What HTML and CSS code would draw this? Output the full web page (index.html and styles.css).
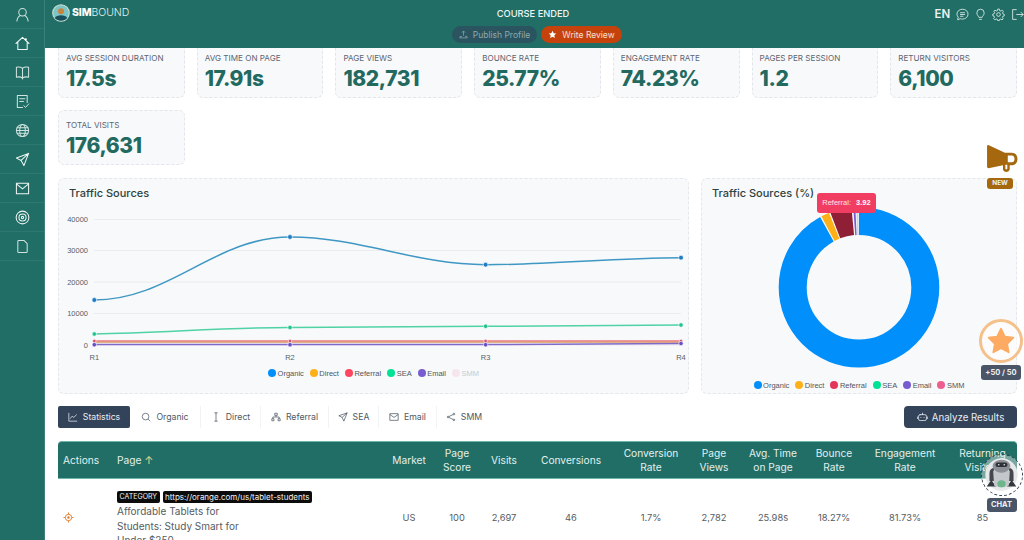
FILE: index.html
```html
<!DOCTYPE html>
<html lang="en">
<head>
<meta charset="utf-8">
<title>Simbound</title>
<link rel="stylesheet" href="styles.css">
</head>
<body>
<div class="app">
  <nav class="sidebar">
    <a class="nav-item"><svg viewBox="0 0 16 16"><circle cx="8" cy="5.500" r="4"/><path d="M2 15c.5-3.500 2.500-5.500 3.800-6M14 15c-.5-3.500-2.500-5.500-3.800-6"/></svg></a>
    <a class="nav-item nav-bright"><svg viewBox="0 0 16 16"><path d="M1 8 8 1.500 15 8M3 6.500V14.500H13V6.500"/><circle cx="11.500" cy="3.500" r="1.200" class="fill"/></svg></a>
    <a class="nav-item"><svg viewBox="0 0 16 16"><path d="M8 3.500C6.500 2.300 3.500 2 1.500 2.500V13C3.500 12.500 6.500 12.800 8 14 9.500 12.800 12.500 12.500 14.500 13V2.500C12.500 2 9.500 2.300 8 3.500ZM8 3.500V15"/></svg></a>
    <a class="nav-item"><svg viewBox="0 0 16 16"><path d="M8 14.500H2.500V1.500H13V9M5 5H10.500M5 8H9"/><path d="M9.500 12.500 11.300 14.500 15 10.500" transform="scale(.95) translate(.5 .6)"/></svg></a>
    <a class="nav-item"><svg viewBox="0 0 16 16"><circle cx="8" cy="8" r="6.500"/><ellipse cx="8" cy="8" rx="3" ry="6.500"/><path d="M1.500 8H14.500M2.300 5H13.700M2.300 11H13.700"/></svg></a>
    <a class="nav-item nav-bright"><svg viewBox="0 0 16 16"><path d="M14.500 1.500 1.500 6.500 6.500 9 9.500 14.500ZM14.500 1.500 6.500 9"/></svg></a>
    <a class="nav-item nav-bright"><svg viewBox="0 0 16 16"><path d="M1.500 2.500H14.500V13.500H1.500ZM1.500 3 8 8.500 14.500 3"/></svg></a>
    <a class="nav-item nav-bright"><svg viewBox="0 0 16 16"><circle cx="8" cy="8" r="6.800"/><circle cx="8" cy="8" r="3.800"/><circle cx="8" cy="8" r="1.200"/></svg></a>
    <a class="nav-item"><svg viewBox="0 0 16 16"><path d="M3 2.500Q3 1.500 4 1.500H9.500L13 5V13.500Q13 14.500 12 14.500H4Q3 14.500 3 13.500Z"/></svg></a>
  </nav>
  <div class="column">
    <header class="topbar">
      <div class="brand">
        <svg class="logo" viewBox="0 0 20 20"><circle cx="10" cy="10" r="9.200" fill="#7cc5c7" stroke="#cfe0d0" stroke-width="1.200"/><circle cx="10" cy="8" r="3.400" fill="#c8843f"/><path d="M3 15.500C5 11.500 15 11.500 17 15.500 13 19.500 7 19.500 3 15.500Z" fill="#17505c"/></svg>
        <span class="brand-name"><b>SIM</b>BOUND</span>
      </div>
      <div class="status">
        <div class="status-title">COURSE ENDED</div>
        <div class="status-actions">
          <span class="pill pill-dark"><svg viewBox="0 0 12 12"><path d="M6 7.500V1.500M3.800 3.500 6 1.300 8.200 3.500M1.500 8.500H4M8 8.500H10.500L11 10.500H1L1.500 8.500"/></svg>Publish Profile</span>
          <span class="pill pill-orange"><svg viewBox="0 0 12 12"><path class="solid" d="M6 1 7.500 4.300 11 4.700 8.400 7.100 9.100 10.700 6 8.900 2.900 10.700 3.600 7.100 1 4.700 4.500 4.300Z"/></svg>Write Review</span>
        </div>
      </div>
      <div class="tools">
        <span class="lang">EN</span>
        <svg viewBox="0 0 16 16"><path d="M8 1.500C4 1.500 1.200 4.200 1.200 7.500c0 1.500.6 2.800 1.500 3.800L2 14.500l3.200-1.300c.9.300 1.800.4 2.800.4 4 0 6.800-2.700 6.800-6.100S12 1.500 8 1.500ZM5 5.800H11M5 8H11M5 10.200H9"/></svg>
        <svg viewBox="0 0 16 16"><path d="M6 11.500C5.500 9.500 3.500 8.800 3.500 6A4.500 4.500 0 0 1 12.500 6C12.500 8.800 10.500 9.500 10 11.500ZM6.300 14H9.700"/></svg>
        <svg viewBox="0 0 16 16"><circle cx="8" cy="8" r="2.300"/><path d="M7 1.300H9L9.400 3.200 10.900 3.800 12.600 2.800 14 4.300 13 5.900 13.600 7.400 15 7.800V9.800L13.400 10.200 12.800 11.600 13.800 13.200 12.300 14.600 10.700 13.600 9.300 14.200 9 15.500H7L6.600 14 5.200 13.500 3.500 14.500 2 13 3.100 11.400 2.500 10 1 9.600V7.500L2.600 7.100 3.200 5.700 2.200 4.100 3.700 2.700 5.300 3.700 6.700 3.100Z"/></svg>
        <svg viewBox="0 0 16 16"><path d="M7 2H2V14H7M6.500 8H15M12 5 15 8 12 11"/></svg>
      </div>
    </header>
    <main class="main">
      <div class="content">
        <section class="metrics">
          <div class="metric"><div class="metric-label">AVG SESSION DURATION</div><div class="metric-value">17.5s</div></div>
          <div class="metric"><div class="metric-label">AVG TIME ON PAGE</div><div class="metric-value">17.91s</div></div>
          <div class="metric"><div class="metric-label">PAGE VIEWS</div><div class="metric-value">182,731</div></div>
          <div class="metric"><div class="metric-label">BOUNCE RATE</div><div class="metric-value">25.77%</div></div>
          <div class="metric"><div class="metric-label">ENGAGEMENT RATE</div><div class="metric-value">74.23%</div></div>
          <div class="metric"><div class="metric-label">PAGES PER SESSION</div><div class="metric-value">1.2</div></div>
          <div class="metric"><div class="metric-label">RETURN VISITORS</div><div class="metric-value">6,100</div></div>
          <div class="metric"><div class="metric-label">TOTAL VISITS</div><div class="metric-value">176,631</div></div>
        </section>

        <section class="charts">
          <div class="panel panel-line">
            <h3 class="panel-title">Traffic Sources</h3>
            <svg class="chart-line" viewBox="59 209 629 157">
              <g class="grid">
                <path d="M94 219.500H681M94 250.500H681M94 282H681M94 313.500H681M94 345H681"/>
              </g>
              <g class="axis">
                <text x="88" y="222">40000</text>
                <text x="88" y="253">30000</text>
                <text x="88" y="284.500">20000</text>
                <text x="88" y="316">10000</text>
                <text x="88" y="347.500">0</text>
              </g>
              <g class="axis axis-x">
                <text x="94.300" y="359.500">R1</text>
                <text x="290" y="359.500">R2</text>
                <text x="485.600" y="359.500">R3</text>
                <text x="681" y="359.500">R4</text>
              </g>
              <path class="s s-organic" d="M94 300C170 300 215 237 290 237C360 237 415 264.700 485.600 264.700C550 264.700 615 257.700 681 257.700"/>
              <path class="s s-sea" d="M94 334C160 333 225 327.500 290 327.500C355 327.500 420 326.300 485.600 326.300C550 326.300 615 325 681 325"/>
              <path class="s s-smm" d="M94 340.700H681"/>
              <path class="s s-referral" d="M94 341.200H681"/>
              <path class="s s-direct" d="M94 342.200H681"/>
              <path class="s s-email" d="M94 344.500H485.600L681 343.500"/>
              <g class="dots-blue"><circle cx="94.300" cy="300" r="2.400"/><circle cx="290" cy="237" r="2.400"/><circle cx="485.600" cy="264.700" r="2.400"/><circle cx="681" cy="257.700" r="2.400"/></g>
              <g class="dots-green"><circle cx="94.300" cy="334" r="2.200"/><circle cx="290" cy="327.500" r="2.200"/><circle cx="485.600" cy="326.300" r="2.200"/><circle cx="681" cy="325" r="2.200"/></g>
              <g class="dots-red"><circle cx="94.300" cy="341" r="1.800"/><circle cx="290" cy="341" r="1.800"/><circle cx="485.600" cy="341" r="1.800"/><circle cx="681" cy="341" r="1.800"/></g>
              <g class="dots-purple"><circle cx="94.300" cy="344.700" r="2.200"/><circle cx="290" cy="344.700" r="2.200"/><circle cx="485.600" cy="344.700" r="2.200"/><circle cx="681" cy="343.500" r="2.200"/></g>
            </svg>
            <div class="legend">
              <span><i class="dot d-blue"></i>Organic</span>
              <span><i class="dot d-orange"></i>Direct</span>
              <span><i class="dot d-red"></i>Referral</span>
              <span><i class="dot d-green"></i>SEA</span>
              <span><i class="dot d-purple"></i>Email</span>
              <span class="legend-off"><i class="dot d-pink"></i>SMM</span>
            </div>
          </div>

          <div class="panel panel-donut">
            <h3 class="panel-title">Traffic Sources (%)</h3>
            <svg class="chart-donut" viewBox="702 209 314 169">
              <g class="ring">
                <circle class="seg seg-organic" cx="859" cy="287.300" r="66.300" pathLength="360" stroke-dasharray="331 360" stroke-dashoffset="0" transform="rotate(-90 859 287.300)"/>
                <circle class="seg seg-direct" cx="859" cy="287.300" r="66.300" pathLength="360" stroke-dasharray="6 360" stroke-dashoffset="-332" transform="rotate(-90 859 287.300)"/>
                <circle class="seg seg-referral" cx="859" cy="287.300" r="68" pathLength="360" stroke-dasharray="15.500 360" stroke-dashoffset="-339" transform="rotate(-90 859 287.300)"/>
                <circle class="seg seg-email" cx="859" cy="287.300" r="66.300" pathLength="360" stroke-dasharray="1.500 360" stroke-dashoffset="-355.800" transform="rotate(-90 859 287.300)"/>
                <circle class="seg seg-smm" cx="859" cy="287.300" r="66.300" pathLength="360" stroke-dasharray="1.500 360" stroke-dashoffset="-358" transform="rotate(-90 859 287.300)"/>
              </g>
            </svg>
            <div class="tooltip">Referral: <b>3.92</b></div>
            <div class="legend">
              <span><i class="dot d-blue"></i>Organic</span>
              <span><i class="dot d-orange"></i>Direct</span>
              <span><i class="dot d-red"></i>Referral</span>
              <span><i class="dot d-green"></i>SEA</span>
              <span><i class="dot d-purple"></i>Email</span>
              <span><i class="dot d-pink2"></i>SMM</span>
            </div>
          </div>
        </section>

        <section class="tabbar">
          <div class="tabs">
            <span class="tab tab-active w-stat"><svg viewBox="0 0 12 12"><path d="M1 1V11H11M2.500 8 5 5 7 6.500 10.500 3"/></svg>Statistics</span>
            <span class="tab w-org"><svg viewBox="0 0 12 12"><circle cx="5.500" cy="5.500" r="4"/><path d="M8.500 8.500 11 11"/></svg>Organic</span>
            <span class="tab w-dir"><svg viewBox="0 0 12 12"><path d="M4 1H8M4 11H8M6 1V11"/></svg>Direct</span>
            <span class="tab w-ref"><svg viewBox="0 0 12 12"><path d="M4.500 1.500H7.500V4H4.500ZM1 8H3.500V10.500H1ZM8.500 8H11V10.500H8.500ZM6 4V6M2.200 8V6H9.800V8"/></svg>Referral</span>
            <span class="tab w-sea"><svg viewBox="0 0 12 12"><path d="M11 1 1 4.500 5 6.500 7 11ZM11 1 5 6.500"/></svg>SEA</span>
            <span class="tab w-mail"><svg viewBox="0 0 12 12"><path d="M1 2H11V10H1ZM1 3 6 6.500 11 3"/></svg>Email</span>
            <span class="tab w-smm"><svg viewBox="0 0 12 12"><circle cx="9.500" cy="2.500" r="1"/><circle cx="2.500" cy="6" r="1"/><circle cx="9.500" cy="9.500" r="1"/><path d="M8.600 3 3.400 5.500M3.400 6.500 8.600 9"/></svg>SMM</span>
          </div>
          <span class="analyze"><svg viewBox="0 0 14 12"><rect x="2" y="3" width="10" height="7.500" rx="2"/><path d="M7 3V1M.5 6V8M13.500 6V8M5 6.500V6.600M9 6.500V6.600"/></svg>Analyze Results</span>
        </section>

        <table class="data">
          <colgroup>
            <col class="c-act"><col class="c-page"><col class="c-mkt"><col class="c-score"><col class="c-vis"><col class="c-conv"><col class="c-rate"><col class="c-views"><col class="c-time"><col class="c-bounce"><col class="c-eng"><col class="c-ret">
          </colgroup>
          <thead>
            <tr>
              <th class="left">Actions</th>
              <th class="left th-page">Page <span class="arrow">↑</span></th>
              <th>Market</th>
              <th>Page<br>Score</th>
              <th>Visits</th>
              <th>Conversions</th>
              <th>Conversion<br>Rate</th>
              <th>Page<br>Views</th>
              <th>Avg. Time<br>on Page</th>
              <th>Bounce<br>Rate</th>
              <th>Engagement<br>Rate</th>
              <th>Returning<br>Visitors</th>
            </tr>
          </thead>
          <tbody>
            <tr>
              <td class="left"><svg class="target" viewBox="0 0 12 12"><circle cx="6" cy="6" r="3.500"/><circle cx="6" cy="6" r="1.300" class="solid"/><path d="M6 .5V2.500M6 9.500V11.500M.5 6H2.500M9.500 6H11.500"/></svg></td>
              <td class="left td-page">
                <div class="tags"><span class="tag">CATEGORY</span><span class="tag tag-url">https://orange.com/us/tablet-students</span></div>
                <div class="page-name">Affordable Tablets for Students: Study Smart for Under $250</div>
              </td>
              <td>US</td><td>100</td><td>2,697</td><td>46</td><td>1.7%</td><td>2,782</td><td>25.98s</td><td>18.27%</td><td>81.73%</td><td>85</td>
            </tr>
          </tbody>
        </table>
      </div>
    </main>
  </div>

  <div class="float float-news">
    <svg viewBox="0 0 32 28"><path class="mega" d="M1.500 0Q.5 0 .5 1.500V22.500Q.5 24 2 24L17 21V25C17 27 19 28 20.500 28 22 28 24 27 24 25V21H26C30 21 32 18 32 14.500 32 11 30 8 26 8H19L3 .5Z"/><path class="mega-hole" d="M22 11H26C28 11 29 12.500 29 14.500 29 16.500 28 18 26 18H22ZM19.500 20.500H21.500V24.500C21.500 25.500 19.500 25.500 19.500 24.500Z"/></svg>
    <span class="badge badge-new">NEW</span>
  </div>
  <div class="float float-star">
    <div class="star-ring"><svg viewBox="0 0 24 24"><path d="M12 1.500 15.300 8.200 22.600 9.200 17.300 14.400 18.600 21.700 12 18.200 5.400 21.700 6.700 14.400 1.400 9.200 8.700 8.200Z"/></svg></div>
    <span class="badge badge-score">+50 / 50</span>
  </div>
  <div class="float float-bot">
    <div class="bot-ring">
      <svg viewBox="0 0 40 40">
        <circle cx="20" cy="20" r="17.500" fill="#e6e8e9"/>
        <path d="M7 19C7 15 9 13 12 13V27H7ZM33 19C33 15 31 13 28 13V27H33Z" fill="#44484e"/>
        <path d="M9 26 4 33H14ZM31 26 36 33H26Z" fill="#34383e"/>
        <path d="M11 16H29L28 32Q20 36 12 32Z" fill="#c4c7cb"/>
        <ellipse cx="20" cy="11" rx="9.500" ry="7" fill="#8d9197"/>
        <rect x="13.500" y="7" width="13" height="5" rx="2.500" fill="#2f3339"/>
        <circle cx="17" cy="9.500" r=".9" fill="#dfe3e6"/>
        <circle cx="23" cy="9.500" r=".9" fill="#dfe3e6"/>
        <ellipse cx="20" cy="30" rx="4.500" ry="3.800" fill="#6db58a"/>
      </svg>
    </div>
    <span class="badge badge-chat">CHAT</span>
  </div>
</div>
</body>
</html>
```

FILE: styles.css
```css
* { box-sizing: border-box; }
html, body { margin: 0; height: 540px; overflow: hidden; background: #fff; }
body { font-family: Inter, "Noto Sans", sans-serif; color: #4c5560; }

.app { position: relative; display: flex; width: 1024px; height: 540px; overflow: hidden; }

/* sidebar */
.sidebar { flex: 0 0 45px; background: #206e65; border-right: 1px solid #3b8177; }
.nav-item { display: flex; align-items: center; justify-content: center; height: 29px; border-bottom: 1px solid #2e786f; }
.nav-item svg { width: 15px; height: 15px; fill: none; stroke: #cfe3df; stroke-width: 1.100; stroke-linejoin: round; stroke-linecap: round; }
.nav-item svg .fill { fill: #fff; stroke: none; }
.nav-bright svg { stroke: #eef7f5; }

/* header */
.column { flex: 1; display: flex; flex-direction: column; min-width: 0; }
.topbar { flex: 0 0 48px; height: 48px; background: #206e65; display: grid; grid-template-columns: 1fr auto 1fr; padding: 0 2px 0 7px; color: #fff; }
.brand { display: flex; align-items: flex-start; gap: 2px; padding-top: 4px; }
.logo { width: 18px; height: 18px; }
.brand-name { font-size: 10.500px; line-height: 18px; font-weight: 300; letter-spacing: -.1px; color: #e6f2f0; }
.brand-name b { font-weight: 800; color: #fff; }
.status { display: flex; flex-direction: column; align-items: center; padding-top: 8px; }
.status-title { margin-right: 8px; font-size: 9.300px; line-height: 12px; font-weight: 500; color: #eef6f5; }
.status-actions { display: flex; gap: 4px; margin-top: 6px; }
.pill { display: flex; align-items: center; justify-content: center; gap: 5px; height: 17px; border-radius: 9px; font-size: 8.500px; }
.pill svg { width: 9px; height: 9px; fill: none; stroke: currentColor; stroke-width: 1; }
.pill svg .solid { fill: #fff; stroke: none; }
.pill-dark { width: 85px; background: #2a5560; color: #8fa8ab; }
.pill-orange { width: 81px; background: #c5420d; color: #f7e1d6; }
.tools { display: flex; align-items: flex-start; justify-content: flex-end; gap: 5.300px; margin-right: -1.500px; padding-top: 7px; color: #e9f3f1; }
.tools svg { width: 13px; height: 13px; margin-top: 1px; fill: none; stroke: currentColor; stroke-width: 1; stroke-linejoin: round; }
.lang { font-size: 11.500px; line-height: 14px; font-weight: 600; }

/* main */
.main { flex: 1; overflow: hidden; min-height: 0; }
.content { margin-top: -5px; padding: 0 7px 0 13px; display: flex; flex-direction: column; }

.metrics { display: grid; grid-template-columns: repeat(7, 1fr); gap: 12px; }
.metric { height: 55px; padding: 9px 7px 0; background: #f8f9fb; border: 1px dashed #e2e6eb; border-radius: 6px; }
.metric-label { font-size: 8.100px; line-height: 10px; color: #5d6671; white-space: nowrap; }
.metric-value { margin-top: 3px; font-size: 21px; line-height: 26px; font-weight: 800; letter-spacing: -.4px; color: #226a60; white-space: nowrap; }

.charts { display: flex; gap: 12px; margin-top: 13px; }
.panel { position: relative; height: 216px; background: #f8f9fb; border: 1px dashed #e4e7ec; border-radius: 6px; display: flex; flex-direction: column; }
.panel-line { flex: 0 0 631px; }
.panel-donut { flex: 0 0 316px; }
.panel-title { margin: 0; height: 30px; padding: 7px 0 0 10px; font-size: 11px; line-height: 14px; font-weight: 500; color: #2d4340; white-space: nowrap; }
.chart-line { display: block; width: 629px; height: 157px; overflow: visible; }
.chart-donut { display: block; width: 314px; height: 169px; overflow: visible; }
.grid path { fill: none; stroke: #e7e9ee; stroke-width: .8; }
.axis text { font-family: "Liberation Sans", Arial, sans-serif; font-size: 7.500px; fill: #585f66; text-anchor: end; }
.axis-x text { text-anchor: middle; }
.s { fill: none; stroke-width: 1.500; }
.s-organic { stroke: #3f97c4; }
.s-sea { stroke: #4fd3a5; }
.s-smm { stroke: #eeb5c8; }
.s-referral { stroke: #ea7a7e; }
.s-direct { stroke: #e2b084; }
.s-email { stroke: #8169c9; }
.dots-blue circle { fill: #1f7cc4; stroke: #fff; stroke-width: .6; }
.dots-green circle { fill: #1fc48d; stroke: #fff; stroke-width: .6; }
.dots-red circle { fill: #d9506f; stroke: #fff; stroke-width: .6; }
.dots-purple circle { fill: #6a4fc4; stroke: #fff; stroke-width: .6; }

.legend { display: flex; justify-content: center; align-items: center; gap: 6px; height: 14px; font-family: "Liberation Sans", Arial, sans-serif; font-size: 7.500px; color: #4f565d; }
.legend span { display: flex; align-items: center; gap: 1.500px; }
.legend-off { opacity: .3; }
.dot { display: block; width: 8px; height: 8px; border-radius: 50%; }
.d-blue { background: #008ffb; }
.d-orange { background: #feb019; }
.d-red { background: #ff4560; }
.d-green { background: #00e396; }
.d-purple { background: #775dd0; }
.d-pink { background: #f5b8d0; }
.d-pink2 { background: #ee5f8f; }
.panel-donut .d-red { background: #e2375a; }

.seg { fill: none; stroke-width: 28; }
.seg-organic { stroke: #008ffb; }
.seg-direct { stroke: #feb019; }
.seg-referral { stroke: #8f1f35; stroke-width: 31; }
.seg-email { stroke: #775dd0; }
.seg-smm { stroke: #c9d4e6; }

.tooltip { position: absolute; left: 115px; top: 14px; width: 59px; height: 20px; background: #f23d62; border-radius: 3px; color: #fde3e8; font-family: "Liberation Sans", Arial, sans-serif; font-size: 7.500px; line-height: 20px; text-align: center; white-space: pre; }
.tooltip b { color: #fff; margin-left: 3px; }

/* tabs */
.tabbar { display: flex; justify-content: space-between; align-items: stretch; height: 22px; margin-top: 12px; }
.tabs { display: flex; }
.tab { display: flex; align-items: center; justify-content: center; gap: 5px; height: 22px; font-size: 8.700px; color: #4f5963; border-right: 1px solid #f1f3f5; }
.tab svg { width: 10px; height: 10px; fill: none; stroke: currentColor; stroke-width: .9; stroke-linejoin: round; }
.tab-active { background: #33435a; color: #e8edf2; border-right: 0; border-radius: 2px; }
.w-stat { width: 72px; }
.w-org { width: 71px; }
.w-dir { width: 60px; }
.w-ref { width: 68px; }
.w-sea { width: 50px; }
.w-mail { width: 58px; }
.w-smm { width: 54px; border-right: 0; }
.analyze { display: flex; align-items: center; justify-content: center; gap: 4px; width: 113px; background: #33435a; color: #e8edf2; font-size: 9.700px; border-radius: 4px; }
.analyze svg { width: 11px; height: 10px; fill: none; stroke: currentColor; stroke-width: 1; stroke-linecap: round; }

/* table */
.data { width: 959px; margin-top: 13px; table-layout: fixed; border-collapse: separate; border-spacing: 0; font-size: 9.300px; color: #555c62; }
.c-act { width: 53px; }
.c-page { width: 273px; }
.c-mkt { width: 50px; }
.c-score { width: 46px; }
.c-vis { width: 48px; }
.c-conv { width: 86px; }
.c-rate { width: 74px; }
.c-views { width: 52px; }
.c-time { width: 66px; }
.c-bounce { width: 56px; }
.c-eng { width: 86px; }
.c-ret { width: 69px; }
.data th { height: 38px; padding: 0; background: #206e65; border-top: 1px solid #6fb5ad; border-bottom: 1px solid #6fb5ad; color: #e3f0ee; font-size: 10.200px; font-weight: 400; line-height: 14.500px; text-align: center; white-space: nowrap; }
.data th:first-child { border-top-left-radius: 4px; }
.data th:last-child { border-top-right-radius: 4px; }
.data th.left, .data td.left { text-align: left; padding-left: 5px; }
.data th.th-page, .data td.td-page { padding-left: 6px; }
.arrow { color: #e7d68f; font-size: 11px; }
.data td { height: 76px; padding: 0; text-align: center; vertical-align: middle; }
.data td.td-page { vertical-align: top; padding-top: 12px; }
.target { display: block; width: 11px; height: 11px; fill: none; stroke: #e07b2e; stroke-width: 1; }
.target .solid { fill: #e07b2e; stroke: none; }
.tags { display: flex; gap: 3px; }
.tag { height: 12px; padding: 0 2.500px; background: #0c0c0c; color: #f2f2f2; border-radius: 2px; font-size: 7px; line-height: 12px; white-space: nowrap; }
.tag-url { font-size: 8px; }
.page-name { width: 135px; margin-top: 1px; font-size: 10px; line-height: 14.500px; color: #555c62; }

/* floating widgets */
.float { position: absolute; display: flex; flex-direction: column; align-items: center; }
.float-news { left: 985px; top: 145px; width: 33px; gap: 6px; }
.float-news svg { display: block; width: 32px; height: 27px; }
.mega { fill: #a5680f; }
.mega-hole { fill: #fff; }
.badge { display: block; border-radius: 3px; color: #eef1f4; font-weight: 700; text-align: center; white-space: nowrap; }
.badge-new { width: 26px; height: 11px; margin-right: 3px; background: #a5680f; font-size: 6.500px; line-height: 11px; }
.float-star { left: 979px; top: 319px; width: 44px; gap: 2px; }
.star-ring { width: 44px; height: 44px; border: 3px solid #f4c18a; border-radius: 50%; display: flex; align-items: center; justify-content: center; background: rgba(255,255,255,.5); }
.star-ring svg { width: 28px; height: 28px; fill: #fdab62; stroke: #fdab62; stroke-width: 1.500; stroke-linejoin: round; }
.badge-score { width: 40px; height: 15px; background: #4a5568; font-size: 7.500px; line-height: 15px; }
.float-bot { left: 980px; top: 454px; width: 43px; gap: 2px; }
.bot-ring { width: 42px; height: 42px; padding: 1px; border: 1.500px dashed #33414f; border-radius: 50%; background: rgba(255,255,255,.4); }
.bot-ring svg { display: block; width: 37px; height: 37px; }
.badge-chat { width: 30px; height: 14px; background: #4a5568; font-size: 7.500px; line-height: 14px; }
```
